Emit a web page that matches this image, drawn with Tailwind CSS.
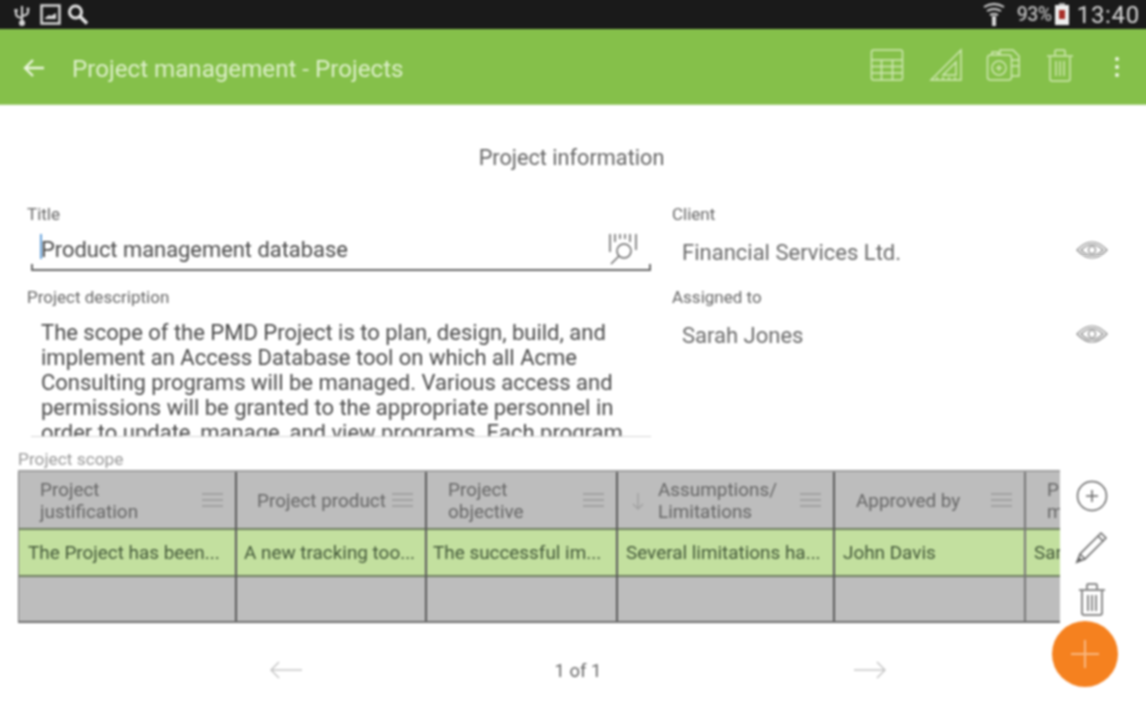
<!DOCTYPE html>
<html lang="en">
<head>
    <meta charset="UTF-8">
    <meta name="viewport" content="width=device-width, initial-scale=1.0">
    <title>Project management - Projects</title>
    <script src="https://cdn.jsdelivr.net/npm/@tailwindcss/browser@4"></script>
</head>
<body class="bg-white">
<div class="w-[1146px] h-[716px] overflow-hidden">
<!-- 4px overscan so the soft edge of the blur stays off screen -->
<div class="relative w-[1154px] h-[724px] -m-[4px] p-[4px] bg-white font-['Roboto',sans-serif] text-[#555] blur-[0.8px]">

    <!-- Status bar -->
    <div class="-mx-[4px] -mt-[4px] h-[33px] pt-[4px] bg-[#1a1a1a] flex items-center justify-between pl-[17px] pr-[10px] text-[#d8d8d8]">
        <div class="flex items-center gap-[8px]">
            <svg class="w-[18px] h-[24px]" viewBox="0 0 18 24" fill="none" stroke="#d8d8d8" stroke-width="2">
                <path d="M9 3v18M3 8v3q0 3 6 4M15 7v2q0 3-6 4"/>
                <circle cx="9" cy="20" r="2" fill="#d8d8d8"/>
                <rect x="1.500" y="6" width="3" height="3" fill="#d8d8d8" stroke="none"/>
                <circle cx="15" cy="6" r="1.500" fill="#d8d8d8" stroke="none"/>
            </svg>
            <svg class="w-[21px] h-[21px] ml-[1px]" viewBox="0 0 21 21" fill="none">
                <rect x="1.500" y="1.500" width="18" height="18" stroke="#d8d8d8" stroke-width="2.500"/>
                <path d="M5 14l4-3 2 1 5-3v6H5z" fill="#d8d8d8"/>
            </svg>
            <svg class="w-[23px] h-[23px] -ml-[3px]" viewBox="0 0 23 23" fill="none" stroke="#e4e4e4">
                <circle cx="9.500" cy="9" r="6" stroke-width="3"/>
                <path d="M14 13.500l7 7" stroke-width="3.500"/>
            </svg>
        </div>
        <div class="flex items-center">
            <svg class="w-[24px] h-[26px] mr-[11px]" viewBox="0 0 24 26" fill="none" stroke="#d8d8d8" stroke-width="2">
                <path d="M2 5q10-6 20 0M5 9q7-4 14 0M8 13q4-2 8 0"/>
                <path d="M12 14v10" stroke-width="4"/>
            </svg>
            <span class="text-[19.500px] text-[#b8b8b8] font-medium tracking-[-0.5px]">93%</span>
            <div class="relative w-[14px] h-[20px] bg-[#eee] ml-[3px] mr-[8px]">
                <div class="absolute left-[4px] top-[5px] w-[6px] h-[9px] bg-[#a8302a]"></div>
                <div class="absolute left-[4px] -top-[2px] w-[6px] h-[2px] bg-[#aaa]"></div>
            </div>
            <span class="text-[24px] text-[#d8d8d8] tracking-[0.7px]">13:40</span>
        </div>
    </div>

    <!-- Toolbar -->
    <div class="-mx-[4px] h-[76px] bg-[#85c04a] flex items-center border-b border-[#a5d07a]">
        <svg class="w-[24px] h-[24px] ml-[26px] mt-[2px]" viewBox="0 0 24 24" fill="none" stroke="#eaf5dc" stroke-width="2.400">
            <path d="M22 12H3M11 4l-8 8 8 8"/>
        </svg>
        <h1 class="ml-[26px] mt-[6px] text-[24.150px] text-[#dcefc8] flex-1">Project management - Projects</h1>
        <svg class="w-[34px] h-[34px] -mt-[3px]" viewBox="0 0 34 34" fill="none" stroke="#cfe7b3" stroke-width="1.500">
            <rect x="1.500" y="2" width="31" height="30" rx="2"/>
            <path d="M1.500 12h31M1.500 18.500h31M1.500 25h31M11.500 12v20M22.500 12v20"/>
        </svg>
        <svg class="w-[34px] h-[34px] ml-[25px] -mt-[3px]" viewBox="0 0 34 34" fill="none" stroke="#cfe7b3" stroke-width="1.500">
            <path d="M32 2v30H2zM27 14v13H14zM8 32v-3M14 32v-3M20 32v-3M26 32v-3"/>
        </svg>
        <svg class="w-[34px] h-[34px] ml-[23px] -mt-[3px]" viewBox="0 0 34 34" fill="none" stroke="#cfe7b3" stroke-width="1.500">
            <path d="M14 7V2h13l6 6v20h-8"/>
            <rect x="1.500" y="7" width="24" height="25" rx="3"/>
            <path d="M6 7V4h6v3"/>
            <circle cx="13" cy="20" r="7"/>
            <path d="M13 17v6M10 20h6M26 12h7M26 18h7"/>
        </svg>
        <svg class="w-[28px] h-[34px] ml-[26px] -mt-[3px]" viewBox="0 0 28 34" fill="none" stroke="#cfe7b3" stroke-width="1.500">
            <path d="M1 8h26M9 7V3q0-1 1-1h8q1 0 1 1v4M4 9v22q0 2 2 2h16q2 0 2-2V9M10 13v15M14 13v15M18 13v15"/>
        </svg>
        <div class="ml-[41px] mr-[31px] flex flex-col gap-[4px]">
            <div class="w-[4px] h-[4px] rounded-full bg-[#eef7e2]"></div>
            <div class="w-[4px] h-[4px] rounded-full bg-[#eef7e2]"></div>
            <div class="w-[4px] h-[4px] rounded-full bg-[#eef7e2]"></div>
        </div>
    </div>

    <!-- Form -->
    <h2 class="pt-[40px] h-[100px] text-center text-[21.700px] leading-[26px] text-[#666] pr-[3px]">Project information</h2>

    <div class="flex h-[246px]">
        <div class="w-[672px] pl-[27px] shrink-0">
            <div class="text-[17px] leading-[18px] text-[#666]">Title</div>
            <div class="relative ml-[4px] w-[620px] h-[48px] flex items-center pl-[10px] border-b-2 border-[#666] text-[21.900px] text-[#4a4a4a]">
                <span class="absolute left-[9px] top-[11px] w-[2px] h-[25px] bg-[#6aa5dc]"></span>
                <span class="absolute left-0 bottom-0 w-[2px] h-[5px] bg-[#666]"></span>
                <span class="absolute right-0 bottom-0 w-[2px] h-[5px] bg-[#666]"></span>
                <span class="mt-[8px]">Product management database</span>
                <svg class="absolute right-[13px] top-[8px] w-[30px] h-[34px]" viewBox="0 0 30 34" fill="none" stroke="#666" stroke-width="1.500">
                    <path d="M2 3v18M7 3v8M12 3v5M17 3v5M22 3v8M28 3v16"/>
                    <circle cx="16" cy="20" r="7"/>
                    <path d="M11 25l-8 8"/>
                </svg>
            </div>
            <div class="mt-[17px] text-[17px] leading-[18px] text-[#666]">Project description</div>
            <div class="ml-[4px] w-[620px] h-[127px] mt-[4px] overflow-hidden border-b border-[#d6d6d6] pl-[10px] pt-[10px] text-[22px] leading-[25px] text-[#4a4a4a] whitespace-nowrap">
                The scope of the PMD Project is to plan, design, build, and<br>
                implement an Access Database tool on which all Acme<br>
                Consulting programs will be managed. Various access and<br>
                permissions will be granted to the appropriate personnel in<br>
                order to update, manage, and view programs. Each program
            </div>
        </div>

        <div class="flex-1">
            <div class="text-[17px] leading-[18px] text-[#666]">Client</div>
            <div class="flex items-center justify-between h-[48px] pl-[10px] pr-[38px] text-[22px] text-[#6a6a6a]">
                <span class="mt-[11px]">Financial Services Ltd.</span>
                <svg class="w-[32px] h-[22px] mt-[5px]" viewBox="0 0 32 22" fill="none" stroke="#888" stroke-width="1.200">
                    <path d="M1 11Q16-5 31 11 16 27 1 11z"/>
                    <path d="M5 11Q16 0 27 11 16 22 5 11z"/>
                    <circle cx="16" cy="11" r="3.500"/>
                </svg>
            </div>
            <div class="mt-[17px] text-[17px] leading-[18px] text-[#666]">Assigned to</div>
            <div class="flex items-center justify-between h-[58px] pl-[10px] pr-[38px] text-[22px] text-[#6a6a6a]">
                <span>Sarah Jones</span>
                <svg class="w-[32px] h-[22px] -mt-[2px]" viewBox="0 0 32 22" fill="none" stroke="#888" stroke-width="1.200">
                    <path d="M1 11Q16-5 31 11 16 27 1 11z"/>
                    <path d="M5 11Q16 0 27 11 16 22 5 11z"/>
                    <circle cx="16" cy="11" r="3.500"/>
                </svg>
            </div>
        </div>
    </div>

    <!-- Project scope -->
    <div class="pl-[18px] -mt-[1px] text-[17.300px] leading-[18px] text-[#999]">Project scope</div>
    <div class="flex mt-[2px]">
        <div class="ml-[18px] w-[1042px] h-[153px] overflow-hidden bg-[#bdbdbd] border-t-2 border-[#a0a0a0] border-b-2 border-b-[#6f6f6f]">
            <div class="flex w-[1200px] h-full">
                <div class="w-[219px] flex flex-col border-l border-[#777] border-r-2 border-r-[#5a5a5a]">
                    <div class="h-[56px] pt-[2px] flex items-center pl-[21px] pr-[12px] text-[18.900px] leading-[22px] text-[#666] justify-between"><span>Project<br>justification</span>
                        <span class="flex flex-col gap-[4px] -mt-[3px]"><i class="block w-[21px] h-[2px] bg-[#a2a2a2]"></i><i class="block w-[21px] h-[2px] bg-[#a2a2a2]"></i><i class="block w-[21px] h-[2px] bg-[#a2a2a2]"></i></span>
                    </div>
                    <div class="h-[49px] pt-[2px] bg-[#c3e09f] border-y-2 border-[#6f7f60] flex items-center pl-[9px] text-[18.900px] text-[#44593a]">The Project has been...</div>
                    <div class="flex-1"></div>
                </div>
                <div class="w-[190px] flex flex-col border-r-2 border-r-[#5a5a5a]">
                    <div class="h-[56px] pt-[2px] flex items-center pl-[20px] pr-[12px] text-[18.900px] leading-[22px] text-[#666] justify-between"><span>Project product</span>
                        <span class="flex flex-col gap-[4px] -mt-[3px]"><i class="block w-[21px] h-[2px] bg-[#a2a2a2]"></i><i class="block w-[21px] h-[2px] bg-[#a2a2a2]"></i><i class="block w-[21px] h-[2px] bg-[#a2a2a2]"></i></span>
                    </div>
                    <div class="h-[49px] pt-[2px] bg-[#c3e09f] border-y-2 border-[#6f7f60] flex items-center pl-[7px] text-[18.900px] text-[#44593a]">A new tracking too...</div>
                    <div class="flex-1"></div>
                </div>
                <div class="w-[191px] flex flex-col border-r-2 border-r-[#5a5a5a]">
                    <div class="h-[56px] pt-[2px] flex items-center pl-[21px] pr-[12px] text-[18.900px] leading-[22px] text-[#666] justify-between"><span>Project<br>objective</span>
                        <span class="flex flex-col gap-[4px] -mt-[3px]"><i class="block w-[21px] h-[2px] bg-[#a2a2a2]"></i><i class="block w-[21px] h-[2px] bg-[#a2a2a2]"></i><i class="block w-[21px] h-[2px] bg-[#a2a2a2]"></i></span>
                    </div>
                    <div class="h-[49px] pt-[2px] bg-[#c3e09f] border-y-2 border-[#6f7f60] flex items-center pl-[6px] text-[18.900px] text-[#44593a]">The successful im...</div>
                    <div class="flex-1"></div>
                </div>
                <div class="w-[217px] flex flex-col border-r-2 border-r-[#5a5a5a]">
                    <div class="h-[56px] pt-[2px] flex items-center pl-[14px] pr-[12px] text-[18.900px] leading-[22px] text-[#666]">
                        <svg class="w-[12px] h-[18px] mr-[14px]" viewBox="0 0 12 18" fill="none" stroke="#a2a2a2" stroke-width="1.500"><path d="M6 1v16M1 12l5 5 5-5"/></svg>
                        <span class="flex-1">Assumptions/<br>Limitations</span>
                        <span class="flex flex-col gap-[4px] -mt-[3px]"><i class="block w-[21px] h-[2px] bg-[#a2a2a2]"></i><i class="block w-[21px] h-[2px] bg-[#a2a2a2]"></i><i class="block w-[21px] h-[2px] bg-[#a2a2a2]"></i></span>
                    </div>
                    <div class="h-[49px] pt-[2px] bg-[#c3e09f] border-y-2 border-[#6f7f60] flex items-center pl-[8px] text-[18.900px] text-[#44593a]">Several limitations ha...</div>
                    <div class="flex-1"></div>
                </div>
                <div class="w-[191px] flex flex-col border-r-2 border-r-[#777]">
                    <div class="h-[56px] pt-[2px] flex items-center pl-[21px] pr-[12px] text-[18.900px] leading-[22px] text-[#666] justify-between"><span>Approved by</span>
                        <span class="flex flex-col gap-[4px] -mt-[3px]"><i class="block w-[21px] h-[2px] bg-[#a2a2a2]"></i><i class="block w-[21px] h-[2px] bg-[#a2a2a2]"></i><i class="block w-[21px] h-[2px] bg-[#a2a2a2]"></i></span>
                    </div>
                    <div class="h-[49px] pt-[2px] bg-[#c3e09f] border-y-2 border-[#6f7f60] flex items-center pl-[8px] text-[18.900px] text-[#44593a]">John Davis</div>
                    <div class="flex-1"></div>
                </div>
                <div class="w-[190px] flex flex-col">
                    <div class="h-[56px] pt-[2px] flex items-center pl-[21px] text-[18.900px] leading-[22px] text-[#666]"><span>Project<br>manager</span></div>
                    <div class="h-[49px] pt-[2px] bg-[#c3e09f] border-y-2 border-[#6f7f60] flex items-center pl-[8px] text-[18.900px] text-[#44593a]">Sarah Jones</div>
                    <div class="flex-1"></div>
                </div>
            </div>
        </div>

        <div class="flex flex-col items-center w-[64px] pt-[10px] gap-[18px]">
            <svg class="w-[32px] h-[32px]" viewBox="0 0 32 32" fill="none" stroke="#666" stroke-width="1.500">
                <circle cx="16" cy="16" r="14.500"/><path d="M16 10v12M10 16h12"/>
            </svg>
            <svg class="w-[34px] h-[34px]" viewBox="0 0 34 34" fill="none" stroke="#666" stroke-width="1.500">
                <path d="M2 32l3-8L26 3l5 5-21 21zM5 24l5 5M23 6l5 5"/>
                <path d="M2 32l2-4 2 2z" fill="#666"/>
            </svg>
            <svg class="w-[28px] h-[34px]" viewBox="0 0 28 34" fill="none" stroke="#666" stroke-width="1.500">
                <path d="M1 8h26M9 7V3q0-1 1-1h8q1 0 1 1v4M4 9v22q0 2 2 2h16q2 0 2-2V9M10 13v16M14 13v16M18 13v16"/>
            </svg>
        </div>
    </div>

    <!-- Pagination -->
    <div class="relative h-[50px] mt-[22px] flex items-center text-[18.500px] text-[#666]">
        <svg class="ml-[270px] w-[32px] h-[18px]" viewBox="0 0 32 18" fill="none" stroke="#c6c6c6" stroke-width="1.500"><path d="M32 9H1M9 1L1 9l8 8"/></svg>
        <span class="ml-[252px] mt-[4px] w-[48px] text-center whitespace-nowrap">1 of 1</span>
        <svg class="ml-[252px] w-[32px] h-[18px]" viewBox="0 0 32 18" fill="none" stroke="#c6c6c6" stroke-width="1.500"><path d="M0 9h31M23 1l8 8-8 8"/></svg>
    </div>

    <!-- FAB overlays the side actions -->
    <button class="absolute left-[1056px] top-[625px] w-[66px] h-[66px] rounded-full bg-[#f5811f] flex items-center justify-center">
        <svg class="w-[30px] h-[30px]" viewBox="0 0 30 30" fill="none" stroke="#f9b77f" stroke-width="2"><path d="M15 1v28M1 15h28"/></svg>
    </button>
</div>
</div>
</body>
</html>
